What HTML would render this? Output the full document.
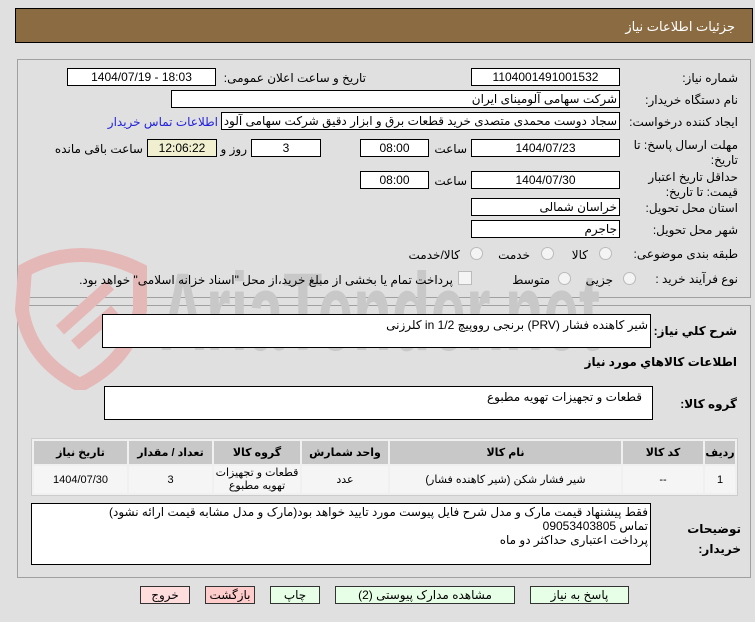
<!DOCTYPE html>
<html><head><meta charset="utf-8"><style>
body{margin:0;width:755px;height:622px;background:#e0e0e0;font-family:"Liberation Sans","DejaVu Sans",sans-serif;font-size:12px;color:#000;position:relative;overflow:hidden}
.a{position:absolute}
.box{position:absolute;background:#fff;border:1px solid #000;box-sizing:border-box;height:18px;line-height:16px;text-align:center;font-size:12px;white-space:nowrap;overflow:hidden}
.r{direction:rtl;text-align:right;padding-right:2px}
.lbl{position:absolute;direction:rtl;text-align:right;white-space:nowrap}
.rad{position:absolute;width:11px;height:11px;border-radius:50%;border:1px solid #bbb;background:#f4f4f4}
table{border-collapse:separate;border-spacing:2px;position:absolute;table-layout:fixed}
th{background:#c8c8c8;font-weight:bold;font-size:11px;height:23px;padding:0}
td{background:#f5f5f5;text-align:center;font-size:11px;height:27px;padding:0}
.btn{position:absolute;height:18px;border:1px solid #333;box-sizing:border-box;text-align:center;line-height:16px;font-size:12px}
</style></head><body>
<div class="a" style="left:15px;top:8px;width:738px;height:35px;background:#8b6b42;border:1px solid #000;box-sizing:border-box"></div>
<div class="lbl" style="right:20px;top:19px;color:#fff;font-size:13px">جزئیات اطلاعات نیاز</div>

<div class="a" style="left:17px;top:59px;width:734px;height:239px;border:1px solid #a0a0a0;box-sizing:border-box"></div>
<div class="a" style="left:17px;top:305px;width:734px;height:273px;border:1px solid #a0a0a0;box-sizing:border-box"></div>

<svg class="a" style="left:0;top:240px" width="620" height="150">
<path d="M25 30 Q80 0 140 30 L140 70 Q130 120 80 145 Q30 120 22 70 Z" fill="none" stroke="#e5b8b8" stroke-width="14"/>
<path d="M60 90 L110 45 M75 105 L115 70" stroke="#e5b8b8" stroke-width="12"/>
<text x="160" y="110" font-family="Liberation Sans" font-weight="bold" font-size="110" fill="#c8c8c8" textLength="440" lengthAdjust="spacingAndGlyphs">AriaTender.net</text>
</svg>

<div class="lbl" style="right:17px;top:71px">شماره نیاز:</div>
<div class="box" style="left:471px;top:68px;width:149px">1104001491001532</div>
<div class="lbl" style="right:389px;top:71px">تاریخ و ساعت اعلان عمومی:</div>
<div class="box" style="left:67px;top:68px;width:149px">1404/07/19 - 18:03</div>

<div class="lbl" style="right:17px;top:93px">نام دستگاه خریدار:</div>
<div class="box r" style="left:171px;top:90px;width:449px">شرکت سهامی آلومینای ایران</div>

<div class="lbl" style="right:17px;top:115px">ایجاد کننده درخواست:</div>
<div class="box r" style="left:221px;top:112px;width:399px">سجاد دوست محمدی متصدی خرید قطعات برق و ابزار دقیق شرکت سهامی آلود</div>
<div class="lbl" style="right:537px;top:115px;color:#2222dd">اطلاعات تماس خریدار</div>

<div class="lbl" style="right:17px;top:138px;line-height:15px">مهلت ارسال پاسخ: تا<br>تاریخ:</div>
<div class="box" style="left:471px;top:139px;width:149px">1404/07/23</div>
<div class="lbl" style="right:288px;top:142px">ساعت</div>
<div class="box" style="left:360px;top:139px;width:69px">08:00</div>
<div class="box" style="left:251px;top:139px;width:70px">3</div>
<div class="lbl" style="right:508px;top:142px">روز و</div>
<div class="box" style="left:147px;top:139px;width:70px;background:#f0f0d0">12:06:22</div>
<div class="lbl" style="right:612px;top:142px">ساعت باقی مانده</div>

<div class="lbl" style="right:17px;top:170px;line-height:15px">حداقل تاریخ اعتبار<br>قیمت: تا تاریخ:</div>
<div class="box" style="left:471px;top:171px;width:149px">1404/07/30</div>
<div class="lbl" style="right:288px;top:174px">ساعت</div>
<div class="box" style="left:360px;top:171px;width:69px">08:00</div>

<div class="lbl" style="right:17px;top:201px">استان محل تحویل:</div>
<div class="box r" style="left:471px;top:198px;width:149px">خراسان شمالی</div>
<div class="lbl" style="right:17px;top:223px">شهر محل تحویل:</div>
<div class="box r" style="left:471px;top:220px;width:149px">جاجرم</div>

<div class="lbl" style="right:17px;top:247px">طبقه بندی موضوعی:</div>
<div class="rad" style="left:599px;top:247px"></div><div class="lbl" style="right:167px;top:248px">کالا</div>
<div class="rad" style="left:541px;top:247px"></div><div class="lbl" style="right:225px;top:248px">خدمت</div>
<div class="rad" style="left:470px;top:247px"></div><div class="lbl" style="right:295px;top:248px">کالا/خدمت</div>

<div class="lbl" style="right:17px;top:272px">نوع فرآیند خرید :</div>
<div class="rad" style="left:623px;top:272px"></div><div class="lbl" style="right:142px;top:273px">جزیی</div>
<div class="rad" style="left:558px;top:272px"></div><div class="lbl" style="right:205px;top:273px">متوسط</div>
<div class="a" style="left:458px;top:271px;width:12px;height:12px;border:1px solid #bbb;background:#f4f4f4"></div>
<div class="lbl" style="right:302px;top:273px">پرداخت تمام یا بخشی از مبلغ خرید،از محل "اسناد خزانه اسلامی" خواهد بود.</div>

<div class="lbl" style="right:18px;top:324px;font-weight:bold">شرح کلي نياز:</div>
<div class="box r" style="left:102px;top:314px;width:549px;height:34px;text-align:right;line-height:20px;background:#fff">شیر  کاهنده فشار (PRV) برنجی رووپیچ 1/2 in کلرزنی</div>
<div class="lbl" style="right:18px;top:355px;font-weight:bold">اطلاعات کالاهاي مورد نياز</div>
<div class="lbl" style="right:18px;top:397px;font-weight:bold">گروه کالا:</div>
<div class="box r" style="left:104px;top:386px;width:549px;height:34px;text-align:right;line-height:20px;padding-right:10px">قطعات و تجهیزات تهویه مطبوع</div>

<table style="left:31px;top:438px;width:707px;direction:rtl;background:#f0f0f0;border:1px solid #ccc">
<colgroup><col style="width:30px"><col style="width:80px"><col style="width:231px"><col style="width:86px"><col style="width:86px"><col style="width:83px"><col></colgroup>
<tr><th>ردیف</th><th>کد کالا</th><th>نام کالا</th><th>واحد شمارش</th><th>گروه کالا</th><th>تعداد / مقدار</th><th>تاریخ نیاز</th></tr>
<tr><td>1</td><td>--</td><td>شیر فشار شکن (شیر کاهنده فشار)</td><td>عدد</td><td style="line-height:13px;font-size:11px">قطعات و تجهیزات<br>تهویه مطبوع</td><td>3</td><td>1404/07/30</td></tr>
</table>

<div class="lbl" style="right:14px;top:519px;font-weight:bold;line-height:20px">توضیحات<br>خریدار:</div>
<div class="box r" style="left:31px;top:503px;width:620px;height:62px;text-align:right;line-height:14px;padding-top:1px;white-space:normal">فقط پیشنهاد قیمت مارک و مدل شرح فایل پیوست مورد تایید خواهد بود(مارک و مدل مشابه قیمت ارائه نشود)<br>تماس 09053403805<br>پرداخت اعتباری حداکثر دو ماه</div>

<div class="btn" style="left:140px;top:586px;width:50px;background:#fdd">خروج</div>
<div class="btn" style="left:205px;top:586px;width:50px;background:#fcc">بازگشت</div>
<div class="btn" style="left:270px;top:586px;width:50px;background:#e6ffe6">چاپ</div>
<div class="btn" style="left:335px;top:586px;width:180px;background:#e6ffe6">مشاهده مدارک پیوستی (2)</div>
<div class="btn" style="left:530px;top:586px;width:99px;background:#e6ffe6">پاسخ به نیاز</div>
</body></html>
